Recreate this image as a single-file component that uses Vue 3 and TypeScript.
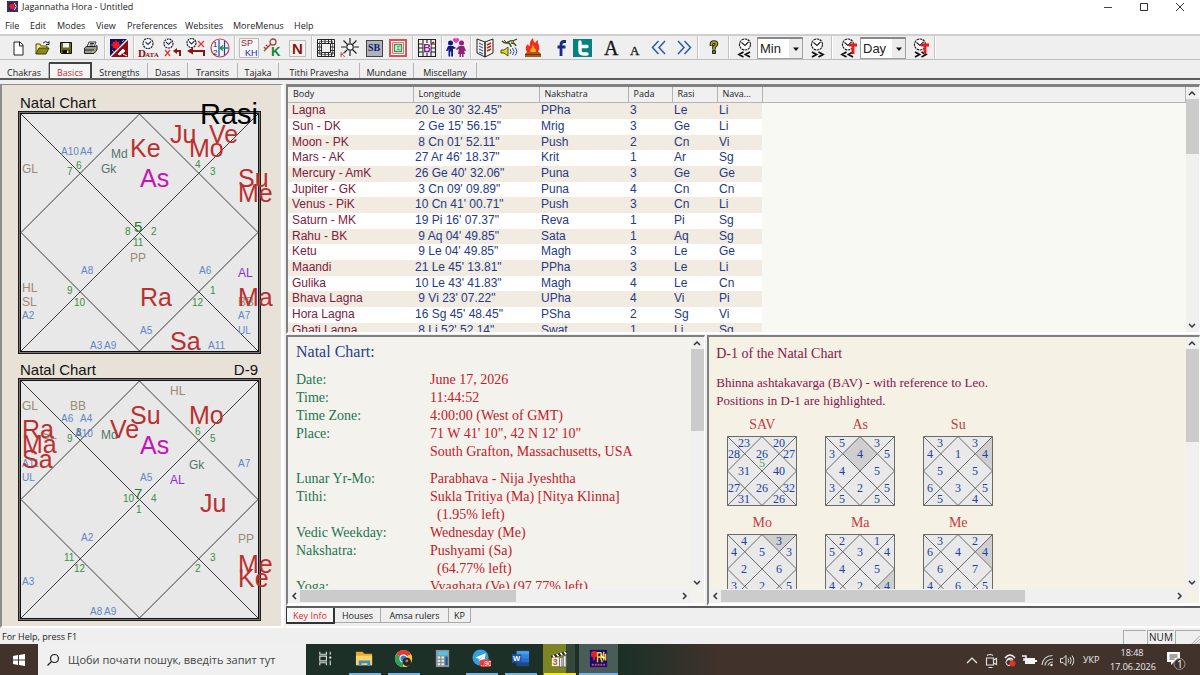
<script setup lang="ts">
import { ref } from 'vue'

type Mark = [text: string, x: number, y: number, kind: string]
interface Kundali { id: string; name: string; division: string; marks: Mark[] }
interface Tool { kind: string; name?: string; art?: string; options?: string[] }
interface Mini { name: string; values: string[]; highlight?: string; ref?: string }

const menus = ['File', 'Edit', 'Modes', 'View', 'Preferences', 'Websites', 'MoreMenus', 'Help']
const tabs = ['Chakras', 'Basics', 'Strengths', 'Dasas', 'Transits', 'Tajaka', 'Tithi Pravesha', 'Mundane', 'Miscellany']
const infoTabs = ['Key Info', 'Houses', 'Amsa rulers', 'KP']
const activeTab = ref('Basics')
const activeInfo = ref('Key Info')
const search = ref('')

const charts: Kundali[] = [
  {
    id: 'rasi', name: 'Natal Chart', division: '',
    marks: [
      ['A10', 59, 70, 'arudha'], ['A4', 78, 70, 'arudha'], ['Md', 109, 73, 'upa'], ['Gk', 99, 88, 'upa'],
      ['GL', 20, 88, 'lagna'], ['6', 74, 84, 'sign'], ['7', 65, 90, 'sign'], ['4', 193, 83, 'sign'],
      ['3', 208, 90, 'sign'], ['8', 123, 150, 'sign'], ['5', 132, 147, 'first'], ['2', 149, 150, 'sign'],
      ['11', 131, 161, 'sign'], ['PP', 128, 177, 'lagna'], ['A8', 79, 189, 'arudha'], ['A6', 197, 189, 'arudha'],
      ['AL', 236, 192, 'al'], ['HL', 20, 207, 'lagna'], ['SL', 20, 221, 'lagna'], ['9', 65, 209, 'sign'],
      ['10', 72, 221, 'sign'], ['12', 190, 221, 'sign'], ['1', 208, 209, 'sign'], ['BB', 236, 221, 'lagna'],
      ['A2', 20, 234, 'arudha'], ['A7', 236, 234, 'arudha'], ['A5', 138, 249, 'arudha'], ['UL', 236, 249, 'arudha'],
      ['A3', 88, 264, 'arudha'], ['A9', 102, 264, 'arudha'], ['A11', 206, 264, 'arudha'],
      ['Ke', 128, 72, 'graha'], ['Ju', 168, 58, 'graha'], ['Ve', 207, 58, 'graha'], ['Mo', 187, 72, 'graha'],
      ['As', 138, 102, 'asc'], ['Su', 236, 102, 'graha'], ['Me', 236, 117, 'graha'], ['Ra', 138, 221, 'graha'],
      ['Ma', 236, 221, 'graha'], ['Sa', 168, 265, 'graha'], ['Rasi', 198, 39, 'caption'],
    ],
  },
  {
    id: 'd9', name: 'Natal Chart', division: 'D-9',
    marks: [
      ['GL', 20, 58, 'lagna'], ['BB', 68, 58, 'lagna'], ['HL', 168, 43, 'lagna'], ['A6', 59, 70, 'arudha'],
      ['A4', 78, 70, 'arudha'], ['SL', 40, 87, 'lagna'], ['A11', 20, 115, 'arudha'], ['8', 74, 84, 'upanum'],
      ['A10', 73, 85, 'arudha'], ['9', 65, 90, 'sign'], ['Md', 99, 87, 'upa'], ['6', 193, 83, 'sign'],
      ['5', 208, 90, 'sign'], ['Gk', 187, 117, 'upa'], ['A7', 236, 115, 'arudha'], ['UL', 20, 129, 'arudha'],
      ['A5', 138, 129, 'arudha'], ['AL', 168, 132, 'al'], ['7', 132, 147, 'first'], ['10', 121, 150, 'sign'],
      ['4', 149, 150, 'sign'], ['1', 134, 161, 'sign'], ['PP', 236, 191, 'lagna'], ['A2', 79, 189, 'arudha'],
      ['11', 62, 209, 'sign'], ['12', 72, 220, 'sign'], ['3', 208, 209, 'sign'], ['2', 193, 220, 'sign'],
      ['A3', 20, 233, 'arudha'], ['A8', 88, 263, 'arudha'], ['A9', 102, 263, 'arudha'],
      ['Su', 128, 72, 'graha'], ['Ve', 108, 86, 'graha'], ['Mo', 187, 72, 'graha'], ['Ra', 20, 86, 'graha'],
      ['Ma', 20, 101, 'graha'], ['Sa', 20, 116, 'graha'], ['As', 138, 102, 'asc'], ['Ju', 198, 160, 'graha'],
      ['Me', 236, 221, 'graha'], ['Ke', 236, 235, 'graha'],
    ],
  },
]

const columns = ['Body', 'Longitude', 'Nakshatra', 'Pada', 'Rasi', 'Nava...']
const bodies: string[][] = [
  ['Lagna', '20 Le 30\' 32.45"', 'PPha', '3', 'Le', 'Li'],
  ['Sun - DK', ' 2 Ge 15\' 56.15"', 'Mrig', '3', 'Ge', 'Li'],
  ['Moon - PK', ' 8 Cn 01\' 52.11"', 'Push', '2', 'Cn', 'Vi'],
  ['Mars - AK', '27 Ar 46\' 18.37"', 'Krit', '1', 'Ar', 'Sg'],
  ['Mercury - AmK', '26 Ge 40\' 32.06"', 'Puna', '3', 'Ge', 'Ge'],
  ['Jupiter - GK', ' 3 Cn 09\' 09.89"', 'Puna', '4', 'Cn', 'Cn'],
  ['Venus - PiK', '10 Cn 41\' 00.71"', 'Push', '3', 'Cn', 'Li'],
  ['Saturn - MK', '19 Pi 16\' 07.37"', 'Reva', '1', 'Pi', 'Sg'],
  ['Rahu - BK', ' 9 Aq 04\' 49.85"', 'Sata', '1', 'Aq', 'Sg'],
  ['Ketu', ' 9 Le 04\' 49.85"', 'Magh', '3', 'Le', 'Ge'],
  ['Maandi', '21 Le 45\' 13.81"', 'PPha', '3', 'Le', 'Li'],
  ['Gulika', '10 Le 43\' 41.83"', 'Magh', '4', 'Le', 'Cn'],
  ['Bhava Lagna', ' 9 Vi 23\' 07.22"', 'UPha', '4', 'Vi', 'Pi'],
  ['Hora Lagna', '16 Sg 45\' 48.45"', 'PSha', '2', 'Sg', 'Vi'],
  ['Ghati Lagna', ' 8 Li 52\' 52.14"', 'Swat', '1', 'Li', 'Sg'],
]

const facts: { label: string; lines: string[]; gap?: boolean }[] = [
  { label: 'Date:', lines: ['June 17, 2026'] },
  { label: 'Time:', lines: ['11:44:52'] },
  { label: 'Time Zone:', lines: ['4:00:00 (West of GMT)'] },
  { label: 'Place:', lines: ['71 W 41\' 10", 42 N 12\' 10"', 'South Grafton, Massachusetts, USA'] },
  { label: 'Lunar Yr-Mo:', lines: ['Parabhava - Nija Jyeshtha'], gap: true },
  { label: 'Tithi:', lines: ['Sukla Tritiya (Ma) [Nitya Klinna]', '  (1.95% left)'] },
  { label: 'Vedic Weekday:', lines: ['Wednesday (Me)'] },
  { label: 'Nakshatra:', lines: ['Pushyami (Sa)', '  (64.77% left)'] },
  { label: 'Yoga:', lines: ['Vyaghata (Ve) (97.77% left)'] },
]

// House cells in drawing order: top pair, upper row, middle pair, lower row, bottom pair
const houseSpots: [number, number][] = [
  [17, 11], [52, 11], [7, 22], [35, 22], [62, 22], [17, 39], [52, 39],
  [7, 56], [35, 56], [62, 56], [17, 67], [52, 67],
]
const minis: Mini[] = [
  { name: 'SAV', values: ['23', '20', '28', '26', '27', '31', '40', '27', '26', '32', '31', '26'], ref: '5' },
  { name: 'As', values: ['5', '3', '3', '4', '5', '4', '5', '3', '2', '5', '5', '5'], highlight: '35,0 52.5,17.5 35,35 17.5,17.5' },
  { name: 'Su', values: ['3', '3', '4', '1', '4', '5', '5', '6', '3', '5', '5', '4'], highlight: '70,0 70,35 52.5,17.5' },
  { name: 'Mo', values: ['4', '3', '4', '5', '3', '2', '6', '3', '2', '5', '4', '4'], highlight: '35,0 70,0 52.5,17.5' },
  { name: 'Ma', values: ['2', '1', '5', '3', '4', '4', '5', '4', '2', '4', '3', '2'], highlight: '70,35 70,70 52.5,52.5' },
  { name: 'Me', values: ['3', '2', '6', '4', '4', '6', '7', '4', '6', '5', '4', '3'], highlight: '70,0 70,35 52.5,17.5' },
]

const clock = (cx: number, cy: number, r: number, c = '#222') =>
  `<circle cx="${cx}" cy="${cy}" r="${r}" fill="#fff" stroke="${c}" stroke-width="1.2" stroke-dasharray="2 .7"/><path d="M${cx - 2.5} ${cy - 1.5}L${cx} ${cy + 1}L${cx + 3} ${cy - 2}" fill="none" stroke="#1a2f90" stroke-width="1.1"/>`
const sans = 'font-family="Liberation Sans, Arial, sans-serif"'
const serif = 'font-family="Liberation Serif, serif"'
const chevrons = (left: boolean) =>
  left
    ? '<path d="M8.500 14l-4.500 2.500l4.500 2.500M15 14l-4.500 2.500l4.500 2.500" fill="none" stroke="#111" stroke-width="1.800"/>'
    : '<path d="M5 14l4.500 2.500L5 19M11.500 14l4.500 2.500l-4.500 2.500" fill="none" stroke="#111" stroke-width="1.800"/>'
const stepClock = (left: boolean, t: boolean) =>
  `<circle cx="10" cy="6.500" r="5.500" fill="#fff" stroke="#222" stroke-width="1.200" stroke-dasharray="2.500 .6"/><path d="M6.500 4.500l3.500 3l3.500-3.500" fill="none" stroke="#222" stroke-width="1.200"/>${chevrons(left)}` +
  (t ? '<path d="M11 7h8M15 7v9" stroke="#f01818" stroke-width="2.800" fill="none"/>' : '')

const tools: Tool[] = [
  { kind: 'btn', name: 'New', art: '<path d="M6 4h6l3 3v10H6z" fill="#fff" stroke="#222"/><path d="M11.500 4v4H15" fill="none" stroke="#222"/>' },
  { kind: 'btn', name: 'Open', art: '<path d="M4 16V6h4l1 2h6v2" fill="#f2ea70" stroke="#4a4a10"/><path d="M4 16l3-6h10l-3 6z" fill="#8a8a14" stroke="#3a3a08"/><path d="M11 5q3-3 5 0l1-1.500v3h-3" fill="none" stroke="#222"/>' },
  { kind: 'btn', name: 'Save', art: '<path d="M4.500 4.500h11v11h-10l-1-1z" fill="#6b6b10" stroke="#111"/><path d="M7 5h6v4.500H7z" fill="#f0f0f0"/><path d="M6.500 12h7v3.500h-7z" fill="#111"/><path d="M11 12.500h1.500v2.500H11z" fill="#eee"/>' },
  { kind: 'btn', name: 'Print', art: '<path d="M7 9l2-5h7l-2 5" fill="#fff" stroke="#333"/><path d="M4.500 10l2-1.500h9l1.500-1v4.500l-3 3.500H4.500z" fill="#999" stroke="#222"/><path d="M5 12h9M6 15.500h7M10 5.500h4M9.500 7h4" stroke="#222"/><path d="M12 13.500h2" stroke="#d8c820"/>' },
  { kind: 'sep' },
  { kind: 'btn', name: 'Chakra picture', art: '<path d="M1 1h18v18H1z" fill="#10105c"/><path d="M1 19L19 1v18z" fill="#8c0c18"/><path d="M1 19L19 1" stroke="#fff" stroke-width="1.200"/><circle cx="7" cy="7" r="3.600" fill="#f01820"/><path d="M7 2v10M2 7h10M3.500 3.500l7 7M10.500 3.500l-7 7" stroke="#f01820"/><path d="M9 16l5-5l2 2l-5 4zM14 16l4 2" fill="#fff" stroke="#fff"/><path d="M3 12l2 2M13 4l2-2" stroke="#9ac"/>' },
  { kind: 'sep' },
  { kind: 'btn', name: 'Data', art: clock(10, 5.5, 5) + `<text x="0" y="19" ${serif} font-size="11" font-weight="bold" fill="#8a1414">D</text><text x="7" y="19" ${serif} font-size="7" font-weight="bold" fill="#8a1414">ATA</text>` },
  { kind: 'btn', name: 'Reset time', art: clock(6.5, 5.5, 4.5) + '<path d="M3 12l5 6M8 12l-5 6" stroke="#e83030" stroke-width="1.200"/><path d="M18 18v-5h-5" fill="none" stroke="#8a1414" stroke-width="2"/><path d="M15 10l-4 3l4 3z" fill="#8a1414"/>' },
  { kind: 'btn', name: 'Undo time', art: clock(5.5, 5, 4.5) + '<path d="M12 3l6 6M18 3l-6 6" stroke="#e83030" stroke-width="1.200"/><path d="M18 18v-5H6" fill="none" stroke="#8a1414" stroke-width="2"/><path d="M7 9.500l-6 3.500l6 3.500z" fill="#8a1414"/>' },
  { kind: 'btn', name: 'Adjust time', art: `<circle cx="10" cy="10" r="9" fill="#f4f4ff" stroke="#b84050" stroke-width="1.200"/><text x="3" y="9" ${sans} font-size="8" fill="#222">1</text><text x="3" y="17" ${sans} font-size="8" fill="#222">2</text><path d="M9 2v16M14.500 3v14" stroke="#2438b8" stroke-width="1.200"/><path d="M18 10h-7M13 7.500L10 10l3 2.500" fill="none" stroke="#1c9038" stroke-width="1.300"/>` },
  { kind: 'sep' },
  { kind: 'btn', name: 'SP KH', art: `<path d="M.5 .5h19v19H.5z" fill="#f6f6f6" stroke="#bbb"/><text x="2" y="8" ${sans} font-size="9" fill="#9c2030">SP</text><text x="6" y="18" ${sans} font-size="9" fill="#2428a0">KH</text>` },
  { kind: 'btn', name: 'K key', art: `<circle cx="10" cy="4" r="3" fill="none" stroke="#a04040" stroke-width="1.300"/><path d="M8 6l-7 7M3 11l-2-2M5 9l-2-2" stroke="#a04040" stroke-width="1.300"/><text x="8" y="18" ${sans} font-size="13" font-weight="bold" fill="#188038">K</text>` },
  { kind: 'btn', name: 'N', art: `<path d="M2.500 2.500h16v16h-16z" fill="#f6f4ec" stroke="#bbb"/><text x="5" y="16" ${sans} font-size="15" font-weight="bold" fill="#8a1414">N</text>` },
  { kind: 'sep' },
  { kind: 'btn', name: 'Square chart', art: '<path d="M1.500 1.500h17v17h-17zM5.500 5.500h9v9h-9zM5.500 1v4M9 1v4M12.500 1v4M5.500 15v4M9 15v4M12.500 15v4M1 5.500h4M1 9h4M1 12.500h4M15 5.500h4M15 9h4M15 12.500h4M15.500 1v4M15.500 15v4M1 15h4M15 15h4" fill="none" stroke="#222"/><path d="M3.500 3.500h13v13h-13z" fill="none" stroke="#444" stroke-width=".7"/>' },
  { kind: 'btn', name: 'Sun rays', art: `<circle cx="10" cy="9" r="3.200" fill="#fff" stroke="#222" stroke-width="1.200"/><path d="M10 0v5M10 13v5M1 9h5M14 9h5M3.500 2.500l4 4M12.500 11.500l4 4M16.500 2.500l-4 4M7 12l-3 3" stroke="#222" stroke-width="1.200"/><text x="0" y="19" ${sans} font-size="8" fill="#a02020">K</text>` },
  { kind: 'btn', name: 'SB', art: `<path d="M2 2h17v17H2z" fill="#444"/><path d="M3 3h15v15H3z" fill="#aeb2ba"/><text x="4" y="13" ${serif} font-size="10" font-weight="bold" fill="#10206c">SB</text>` },
  { kind: 'btn', name: 'Yantra', art: `<path d="M2 2h16v16H2z" fill="#fff" stroke="#e05050" stroke-width="2"/><path d="M4.500 4.500h11v11h-11z" fill="none" stroke="#e87070"/><path d="M6.500 6.500h7v7h-7z" fill="#e4f8e8" stroke="#309858" stroke-width="1.500"/><path d="M9 8.500h3M9 10h2.500M9 11.500h3" stroke="#309858" stroke-width=".8"/>` },
  { kind: 'sep' },
  { kind: 'btn', name: 'Bhava chart', art: `<path d="M1.500 1.500h17v17h-17zM6 1v18M10 1v18M14 1v18M1 6h18M1 10h18M1 14h18" fill="none" stroke="#222" stroke-width="1.100"/><path d="M6.500 5h7v9.500h-7z" fill="#fff"/><text x="6" y="14" ${sans} font-size="11" font-weight="bold" fill="#8c1890">B</text><path d="M14 6l3-2" stroke="#a01818" stroke-width="1.500"/>` },
  { kind: 'sep' },
  { kind: 'btn', name: 'Compatibility', art: '<path d="M10 5.500l-3-3a1.500 1.500 0 0 1 3-1.500a1.500 1.500 0 0 1 3 1.500z" fill="#e838c8"/><circle cx="4.500" cy="5" r="2.500" fill="#101888"/><path d="M2 8h5l3 2l-2 1l-1-.5v8H5.200v-5h-1v5H2.500V11l-1 2H0z" fill="#101888"/><circle cx="15.500" cy="5" r="2.500" fill="#90207c"/><path d="M13 8h5l2 5h-1.500l-.5-1l1 4h-1.500v3H16v-3h-1v3h-1.500v-3H12l1-5l-2 1l-1-1z" fill="#90207c"/>' },
  { kind: 'sep' },
  { kind: 'btn', name: 'Book', art: '<path d="M2 3V1l8 3l8-3v14l-8 4l-8-4z" fill="#f4f4e8" stroke="#222"/><path d="M10 4v15" stroke="#222" stroke-width="1.500"/><path d="M4 5l4 2M4 8l4 2M4 11l4 2M4 14l4 2" stroke="#2438a8"/><path d="M12 7l4-2M12 10l4-2M12 13l4-2" stroke="#b82828" stroke-width="1.500"/>' },
  { kind: 'btn', name: 'Chant', art: '<path d="M3 3q4 4 8 0q4 0 7-2M8 4q4 2 4 5M12 5q4 0 5 3" fill="none" stroke="#2c5a18" stroke-width="1.500"/><path d="M5 2l3 3M14 2l1 4" stroke="#a02020"/><path d="M2 12h3l4-3v9l-4-3H2z" fill="#e0d820" stroke="#54500c"/><path d="M11 11q2 2.500 0 5M13.500 10q3 3.500 0 7M16 9.500q3.500 4 0 8" fill="none" stroke="#3848b0"/>' },
  { kind: 'btn', name: 'Homa', art: '<path d="M4 14q-3-5 1-8q0 2 2 2q-1-5 3-8q0 3 2 5q1-2 3-3q-1 3 1 5q1 4-1 7z" fill="#f03018"/><path d="M7.500 14q-1-3 1.500-4q0-2 1-3q1 3 2.500 4q1 2 0 3z" fill="#fcb028"/><path d="M4 14h12l2 2v3H2v-3z" fill="#a85a18"/><path d="M2 16.500h16" stroke="#6c3408"/>' },
  { kind: 'gap' },
  { kind: 'btn', name: 'Facebook', art: '<path d="M16 3.500h-2q-3 0-3 3.200V18M7.500 9h8" fill="none" stroke="#142c84" stroke-width="2.800"/>' },
  { kind: 'btn', name: 'Twitter', art: '<path d="M-1 1h19v18H-1z" fill="#088080"/><path d="M6 4v8.500q0 3.500 3.500 3.500H13M6 8.500h7" fill="none" stroke="#fff" stroke-width="3.400" stroke-linecap="round"/>' },
  { kind: 'gap' },
  { kind: 'btn', name: 'Larger text', art: `<text x="3" y="17" ${serif} font-size="20" fill="#111" stroke="#111" stroke-width=".3">A</text>` },
  { kind: 'btn', name: 'Smaller text', art: `<text x="5" y="17" ${serif} font-size="13" fill="#111" stroke="#111" stroke-width=".3">A</text>` },
  { kind: 'btn', name: 'Previous', art: '<path d="M9.500 3L3.500 9.500L9.500 16M16 3L10 9.500L16 16" fill="none" stroke="#2c5aa0" stroke-width="1.500"/>' },
  { kind: 'btn', name: 'Next', art: '<path d="M5 3l6 6.500L5 16M11.500 3l6 6.500L11.500 16" fill="none" stroke="#2c5aa0" stroke-width="1.500"/>' },
  { kind: 'sep wide' },
  { kind: 'btn', name: 'Help', art: '<path d="M7.500 8V6q0-2 2.500-2t2.500 2q0 1.500-2.500 3v2.500" fill="none" stroke="#222" stroke-width="3.600"/><path d="M7.500 7.500V6q0-2 2.500-2t2.500 2q0 1.500-2.500 3v2" fill="none" stroke="#b8b018" stroke-width="1.500"/><path d="M8.500 12.500h3v3h-3z" fill="#8c8810" stroke="#222"/>' },
  { kind: 'sep wide' },
  { kind: 'btn', name: 'Minute back', art: stepClock(true, false) },
  { kind: 'combo', name: 'Time step', options: ['Min', 'Hour', 'Sec'] },
  { kind: 'btn', name: 'Minute forward', art: stepClock(false, false) },
  { kind: 'sep wide' },
  { kind: 'btn', name: 'Transit back', art: stepClock(true, true) },
  { kind: 'combo', name: 'Transit step', options: ['Day', 'Month', 'Year'] },
  { kind: 'btn', name: 'Transit forward', art: stepClock(false, true) },
  { kind: 'sep' },
]

const taskApps = [
  { name: 'Task view', cls: '', art: '<path d="M4 3v2.500h7V3M4 17v-2.500h7V17M4 7.500h7v5H4zM15 3v3M15 12v5" fill="none" stroke="#d8dcd8" stroke-width="1.200"/><path d="M14 8h2v2h-2z" fill="#fff"/>' },
  { name: 'File Explorer', cls: 'open', art: '<path d="M1 3h7l2 2h8v12H1z" fill="#e8a82c"/><path d="M1 7h17v10H1z" fill="#fcd464"/><path d="M4 18v-6h12v6h-3v-3H7v3z" fill="#3c8cd0"/>' },
  { name: 'Chrome', cls: 'open', art: '<circle cx="10" cy="10" r="9" fill="#fff"/><path d="M10 10L2.200 5.500A9 9 0 0 1 17.800 5.500z" fill="#e03c30"/><path d="M10 10L2.200 5.500A9 9 0 0 0 10 19z" fill="#30a050"/><path d="M10 10l7.800-4.500A9 9 0 0 1 10 19z" fill="#f8c828"/><circle cx="10" cy="10" r="4.200" fill="#fff"/><circle cx="10" cy="10" r="3.200" fill="#3c78e0"/><circle cx="13.500" cy="13.500" r="4.500" fill="#2c2424"/><circle cx="13.500" cy="12.500" r="1.500" fill="#a08878"/>' },
  { name: 'Calculator', cls: '', art: '<path d="M3 1h14v18H3z" fill="#8c9498"/><path d="M4.500 2.500h11v4h-11z" fill="#4cc4ec"/><path d="M5 8h2.500v2H5zM9 8h2.500v2H9zM5 11.500h2.500v2H5zM9 11.500h2.500v2H9zM5 15h2.500v2H5zM9 15h2.500v2H9z" fill="#eef2f4"/><path d="M13 8h2.500v9H13z" fill="#1c5c9c"/>' },
  { name: 'Telegram', cls: 'open', art: `<circle cx="9" cy="9" r="8.500" fill="#34a0dc"/><path d="M3.500 9l11-4.500L12.500 14l-3-2.200L8 13.500l-.3-3z" fill="#fff"/><path d="M7.700 10.500l5-4.500l-4 5z" fill="#9cc8e4"/><rect x="8" y="11" width="13" height="8" rx="3.500" fill="#e83c34"/><text x="9" y="18" ${sans} font-size="7" fill="#fff">..90</text>` },
  { name: 'Word', cls: 'open', art: `<path d="M6 2h13v16H6z" fill="#2c6cc8"/><path d="M6 2h13v4H6z" fill="#44a0ec"/><path d="M6 6h13v4H6z" fill="#3084dc"/><path d="M6 14h13v4H6z" fill="#1c488c"/><path d="M1 5.500h10v9H1z" fill="#1c54b0"/><text x="2" y="13" ${sans} font-size="8" font-weight="bold" fill="#fff">W</text>` },
  { name: 'Video editor', cls: 'flash', art: `<path d="M1 7l16-5l1 3L2 10z" fill="#222"/><path d="M3 6.500l2 2.500M7 5.200l2 2.500M11 4l2 2.500M15 3l2 2.500" stroke="#fff" stroke-width="1.700"/><path d="M2 9h14v9H2z" fill="#f0ece0"/><text x="3" y="17" ${sans} font-size="9" font-weight="bold" fill="#c85018">3</text><path d="M10 9h2.500v10H10zM14 7h3v12h-3z" fill="#e8e8e8" stroke="#555" stroke-width=".8"/>` },
  { name: 'Jagannatha Hora', cls: 'current', art: '<path d="M1 1h18v18H1z" fill="#100c78"/><circle cx="5.500" cy="5.500" r="3.500" fill="#f01c20"/><path d="M5.500 8v4" stroke="#f01c20" stroke-width="2"/><path d="M9 14V4h3.500q2 2 0 4.500H9M12 9l2 5M15.500 3v9M13 9h4.500M17.500 5v7" fill="none" stroke="#fcd020" stroke-width="1.500"/><path d="M12 6l4 4" stroke="#fff" stroke-width="1.200"/><path d="M3 16.500h14" stroke="#e04858" stroke-width="2" stroke-dasharray="2 1"/>' },
]

const tray = [
  { name: 'Show hidden icons', art: '<path d="M4 12l5-5l5 5" fill="none" stroke="#eee" stroke-width="1.200"/>' },
  { name: 'Meet now', art: '<path d="M4.500 7h7v7h-7zM11.500 9l3-1.500v6l-3-1.500M5 4.500q3-2 6 0M6.500 16.500h4" fill="none" stroke="#ddd" stroke-width="1.200"/>' },
  { name: 'Recorder', art: '<path d="M4 7q5-6 10 0M6 9q3-3.500 6 0" fill="none" stroke="#eee" stroke-width="1.500"/><circle cx="8" cy="11.500" r="3" fill="none" stroke="#eee"/><circle cx="11.500" cy="12.500" r="3" fill="#e83028"/>' },
  { name: 'Battery', art: '<path d="M5 7h10v6H5zM15 9h2v2h-2z" fill="#f4f4f4"/><path d="M2 5h4v3H4v2" fill="none" stroke="#f4f4f4" stroke-width="1.500"/>' },
  { name: 'Wi-Fi', art: '<path d="M3 14Q4 5 13.500 4.500M6 14.500q.5-6 8-6.500M9 14.500q.5-3 5-3.500" fill="none" stroke="#ccc" stroke-width="1.200"/><circle cx="12.500" cy="14" r="1.200" fill="#eee"/>' },
  { name: 'Volume', art: '<path d="M2.500 7.500h2.500l3-3v10l-3-3H2.500z" fill="none" stroke="#ddd"/><path d="M10 7.500q1.500 2 0 4M12 6q2.500 3.500 0 7M14 4.500q3.500 5 0 10" fill="none" stroke="#ddd"/>' },
]
</script>

<template>
  <div class="desktop">
    <header class="titlebar">
      <svg class="app-icon" viewBox="0 0 12 12" aria-hidden="true">
        <path d="M0 0h12v12H0z" fill="#1c2468" /><path d="M1 1h10v10H1z" fill="none" stroke="#c04058" stroke-dasharray="1 1" />
        <circle cx="5.500" cy="6" r="3" fill="#f01c20" /><path d="M8 2l2 4l-2 4" stroke="#fff" fill="none" />
      </svg>
      <h1>Jagannatha Hora - Untitled</h1>
      <div class="window-buttons">
        <button type="button" aria-label="Minimize"><svg viewBox="0 0 12 12"><path d="M2 6.500h8" stroke="#444" /></svg></button>
        <button type="button" aria-label="Maximize"><svg viewBox="0 0 12 12"><path d="M2.500 2.500h7v7h-7z" fill="none" stroke="#333" /></svg></button>
        <button type="button" aria-label="Close"><svg viewBox="0 0 12 12"><path d="M2 2l8 8M10 2l-8 8" stroke="#333" /></svg></button>
      </div>
    </header>

    <nav class="menubar" aria-label="Menu">
      <button v-for="m in menus" :key="m" type="button">{{ m }}</button>
    </nav>

    <div class="toolbar" role="toolbar" aria-label="Tools">
      <template v-for="(t, i) in tools" :key="i">
        <button v-if="t.kind === 'btn'" type="button" class="tool" :aria-label="t.name">
          <svg viewBox="0 0 20 20" v-html="t.art"></svg>
        </button>
        <span v-else-if="t.kind === 'combo'" class="combo">
          <select :aria-label="t.name">
            <option v-for="o in t.options" :key="o">{{ o }}</option>
          </select>
          <svg class="caret" viewBox="0 0 12 20" aria-hidden="true"><path d="M3 8.500h6L6 12z" fill="#111" /></svg>
        </span>
        <span v-else :class="t.kind"></span>
      </template>
    </div>

    <div class="tabs" role="tablist">
      <button
        v-for="t in tabs" :key="t" type="button" role="tab"
        :aria-selected="activeTab === t" :class="{ active: activeTab === t }" @click="activeTab = t"
      >{{ t }}</button>
    </div>

    <main class="workspace">
      <section class="charts">
        <svg v-for="c in charts" :key="c.id" class="kundali" viewBox="0 0 279 267" role="img" :aria-label="c.name">
          <text x="18" y="23" class="title">{{ c.name }}</text>
          <text x="256" y="23" class="title" text-anchor="end">{{ c.division }}</text>
          <rect x="16" y="26" width="243" height="243" fill="#000" />
          <rect x="17.500" y="27.500" width="240" height="240" fill="#e8e8e8" stroke="#77736d" stroke-width="1.500" />
          <rect x="18.500" y="28.500" width="238" height="238" fill="#e8e8e8" stroke="#111" />
          <path d="M19 29L256 266M256 29L19 266M137.500 29L256 147.500L137.500 266L19 147.500z" fill="none" stroke="#3c3c3c" />
          <text v-for="(m, i) in c.marks" :key="i" :x="m[1]" :y="m[2]" :class="m[3]">{{ m[0] }}</text>
        </svg>
      </section>

      <div class="right">
        <section class="pane bodies">
          <div class="view">
            <table>
              <colgroup>
                <col class="c-body"><col class="c-long"><col class="c-nak"><col class="c-pada"><col class="c-rasi"><col class="c-nava"><col>
              </colgroup>
              <thead>
                <tr><th v-for="c in columns" :key="c" scope="col">{{ c }}</th><td class="rest"></td></tr>
              </thead>
              <tbody>
                <tr v-for="b in bodies" :key="b[0]">
                  <td v-for="(v, i) in b" :key="i">{{ v }}</td>
                </tr>
              </tbody>
            </table>
          </div>
          <div class="scroll v" aria-hidden="true">
            <svg viewBox="0 0 12 12"><path d="M3 8l3-3l3 3" /></svg>
            <div class="track"><i class="thumb t25"></i></div>
            <svg viewBox="0 0 12 12"><path d="M3 4l3 3l3-3" /></svg>
          </div>
        </section>

        <div class="lower">
          <section class="pane info">
            <div class="stack">
              <div class="view">
                <h2>Natal Chart:</h2>
                <dl>
                  <template v-for="f in facts" :key="f.label">
                    <dt :class="{ spaced: f.gap }">{{ f.label }}</dt>
                    <dd :class="{ spaced: f.gap }"><div v-for="l in f.lines" :key="l">{{ l }}</div></dd>
                  </template>
                </dl>
              </div>
              <div class="scroll h" aria-hidden="true">
                <svg viewBox="0 0 12 12"><path d="M8 3L5 6l3 3" /></svg>
                <div class="track"><i class="thumb t57"></i></div>
                <svg viewBox="0 0 12 12"><path d="M4 3l3 3l-3 3" /></svg>
              </div>
            </div>
            <div class="scroll v short" aria-hidden="true">
              <svg viewBox="0 0 12 12"><path d="M3 8l3-3l3 3" /></svg>
              <div class="track"><i class="thumb t36"></i></div>
              <svg viewBox="0 0 12 12"><path d="M3 4l3 3l3-3" /></svg>
            </div>
          </section>

          <section class="pane bav">
            <div class="stack">
              <div class="view">
                <h2>D-1 of the Natal Chart</h2>
                <p>Bhinna ashtakavarga (BAV) - with reference to Leo.<br>Positions in D-1 are highlighted.</p>
                <div class="minis">
                  <figure v-for="m in minis" :key="m.name">
                    <figcaption>{{ m.name }}</figcaption>
                    <svg viewBox="0 0 70 70" role="img" :aria-label="m.name">
                      <rect x=".5" y=".5" width="69" height="69" fill="#e9e9e9" />
                      <polygon v-if="m.highlight" :points="m.highlight" fill="#cfcfcf" />
                      <path d="M.5 .5h69v69H.5zM.5 .5l69 69M69.500 .5l-69 69M35 .5L69.500 35L35 69.500L.5 35z" fill="none" stroke="#6a6a6a" />
                      <text v-if="m.ref" x="35" y="31" class="ref">{{ m.ref }}</text>
                      <text v-for="(v, i) in m.values" :key="i" :x="houseSpots[i][0]" :y="houseSpots[i][1]">{{ v }}</text>
                    </svg>
                  </figure>
                </div>
              </div>
              <div class="scroll h" aria-hidden="true">
                <svg viewBox="0 0 12 12"><path d="M8 3L5 6l3 3" /></svg>
                <div class="track"><i class="thumb t67"></i></div>
                <svg viewBox="0 0 12 12"><path d="M4 3l3 3l-3 3" /></svg>
              </div>
            </div>
            <div class="scroll v short" aria-hidden="true">
              <svg viewBox="0 0 12 12"><path d="M3 8l3-3l3 3" /></svg>
              <div class="track"><i class="thumb t41"></i></div>
              <svg viewBox="0 0 12 12"><path d="M3 4l3 3l3-3" /></svg>
            </div>
          </section>
        </div>

        <div class="info-tabs" role="tablist">
          <button
            v-for="t in infoTabs" :key="t" type="button" role="tab"
            :aria-selected="activeInfo === t" :class="{ active: activeInfo === t }" @click="activeInfo = t"
          >{{ t }}</button>
        </div>
      </div>
    </main>

    <footer class="status">
      <span class="hint">For Help, press F1</span>
      <span class="cell"></span><span class="cell">NUM</span>
      <span class="cell grip"><svg viewBox="0 0 12 12" aria-hidden="true"><path d="M1 12L12 1M5 12l7-7M9 12l3-3" stroke="#999" /></svg></span>
    </footer>

    <div class="taskbar">
      <button type="button" class="start" aria-label="Start">
        <svg viewBox="0 0 14 14"><path d="M1 3l5-1v4.500H1zM7 2l6-1v5.500H7zM1 7.500h5V12l-5-1zM7 7.500h6V13l-6-1z" fill="#fff" /></svg>
      </button>
      <label class="search">
        <svg viewBox="0 0 14 14" aria-hidden="true"><circle cx="8.500" cy="5.500" r="4" fill="none" stroke="#222" stroke-width="1.200" /><path d="M5.500 8.500L1.500 12.500" stroke="#222" stroke-width="1.200" /></svg>
        <input v-model="search" type="text" aria-label="Пошук" placeholder="Щоби почати пошук, введіть запит тут">
      </label>
      <button v-for="a in taskApps" :key="a.name" type="button" class="app" :class="a.cls" :aria-label="a.name">
        <svg viewBox="0 0 20 20" v-html="a.art"></svg>
      </button>
      <div class="tray">
        <button v-for="t in tray" :key="t.name" type="button" :aria-label="t.name"><svg viewBox="0 0 18 18" v-html="t.art"></svg></button>
        <span class="lang">УКР</span>
        <time datetime="2026-06-17T18:48">18:48<br>17.06.2026</time>
        <button type="button" class="notice" aria-label="Notifications">
          <svg viewBox="0 0 20 20">
            <path d="M1 2h13v10H8l-3 3v-3H1z" fill="#fff" /><path d="M3.500 5h8M3.500 7h8M3.500 9h5" stroke="#41322b" stroke-width=".9" />
            <circle cx="13.500" cy="14" r="5.500" fill="#41322b" stroke="#999" /><text x="11" y="18" font-size="10" fill="#fff">1</text>
          </svg>
        </button>
      </div>
    </div>
  </div>
</template>

<style>
body { margin: 0; background: #f0f0f0; }
</style>

<style scoped>
.desktop {
  display: flex; flex-direction: column; height: 100vh; overflow: hidden; box-sizing: border-box;
  background: #efefef; color: #222; font: 9px/12px "Open Sans", "Noto Sans", sans-serif;
}
button { border: 0; padding: 0; margin: 0; background: none; color: inherit; font: inherit; cursor: default; white-space: nowrap; }
h1, h2, p, dl, dd, figure { margin: 0; font-weight: normal; font-size: inherit; }
svg { display: block; flex: none; }

.titlebar { display: flex; align-items: center; flex: none; height: 13px; padding: 0 2px 3px 7px; background: #fff; }
.titlebar h1 { margin-left: 4px; }
.app-icon { width: 11px; height: 11px; }
.window-buttons { display: flex; margin-left: auto; }
.window-buttons button { display: flex; justify-content: center; width: 36px; }
.window-buttons svg { width: 12px; height: 12px; }

.menubar { display: grid; grid-template-columns: 25px 27px 39px 31px 58px 48px 61px auto; justify-content: start; flex: none; height: 16px; padding: 2px 0 0 5px; background: #fff; }
.menubar button { text-align: left; }

.toolbar { display: flex; align-items: center; flex: none; height: 23px; padding-left: 6px; border-top: 2px solid #cfcfcf; border-bottom: 1px solid #bdbdbd; }
.tool { display: flex; align-items: center; justify-content: center; width: 24px; height: 22px; }
.tool svg { width: 20px; height: 20px; overflow: visible; }
.sep { width: 5px; height: 23px; flex: none; background: linear-gradient(90deg, transparent 2px, #c4c4c4 2px, #c4c4c4 3px, #fff 3px, #fff 4px, transparent 4px); }
.sep.wide { width: 7px; }
.gap { width: 3px; }
.combo { position: relative; display: flex; width: 46px; height: 22px; align-self: flex-end; margin-right: 2px; }
.combo select {
  appearance: none; width: 100%; height: 100%; box-sizing: border-box; margin: 0; padding: 0 0 0 2px; border: 1px solid #a0a0a0; border-top: 2px solid #888; border-radius: 0;
  background: linear-gradient(90deg, #fff 31px, #ececec 31px); color: #222; font: 13px/18px "Liberation Sans", Arial, sans-serif;
}
.caret { position: absolute; right: 1px; top: 2px; width: 12px; height: 20px; pointer-events: none; }

.tabs { display: grid; grid-template-columns: 49px 43px 56px 40px 50px 41px 81px 54px 63px; align-items: end; flex: none; height: 17px; border-bottom: 2px solid #5c5c5c; padding-top: 1px; }
.tabs button { height: 15px; border-right: 1px solid #b4b4b4; line-height: 19px; }
.tabs button.active { height: 16px; border: 2px solid #444; border-width: 2px 2px 0 1px; color: #d82830; background: #f6f6f6; line-height: 17px; }

.workspace { display: flex; flex: 1 1 0; min-height: 0; margin-top: 4px; }
.charts { box-sizing: border-box; flex: none; width: 284px; margin-right: 2px; border: solid #8c8c8c; border-width: 1px 0 0 2px; border-right: 3px solid #fff; border-bottom: 2px solid #fff; background: #e8e1d7; }
.kundali { width: 279px; height: 267px; overflow: visible; font-family: "Liberation Sans", Arial, sans-serif; }
.title { font-size: 15px; fill: #111; }
.arudha { font-size: 10px; fill: #5f86c6; }
.upa { font-size: 12px; fill: #54746a; }
.upanum { font-size: 10px; fill: #306a58; }
.lagna { font-size: 12px; fill: #9a8a72; }
.sign { font-size: 10px; fill: #3c8c44; }
.al { font-size: 12px; fill: #8430d4; }
.first { font-size: 15px; fill: #2c7838; }
.graha { font-size: 25px; fill: #b93030; }
.asc { font-size: 25px; fill: #c414b4; }
.caption { font-size: 29px; fill: #000; }

.right { display: flex; flex-direction: column; flex: 1 1 0; min-width: 0; }
.pane { display: flex; box-sizing: border-box; min-width: 0; min-height: 0; border: solid #808080; border-width: 2px 1px 3px 2px; border-right-color: #fff; border-bottom-color: #fff; overflow: hidden; background: #f0f0f0; }
.view { flex: 1 1 0; min-width: 0; min-height: 0; overflow: hidden; }
.stack { display: flex; flex-direction: column; flex: 1 1 0; min-width: 0; }
.bodies { flex: 246 1 0; border-top-width: 3px; border-bottom-width: 2px; }
.bodies .view { background: #f8f9f3; }
table { table-layout: fixed; width: 100%; border-collapse: collapse; }
.c-body { width: 125px; } .c-long { width: 126px; } .c-nak { width: 89px; } .c-pada { width: 44px; } .c-rasi { width: 45px; } .c-nava { width: 45px; }
th, .rest { box-sizing: border-box; height: 15px; padding: 0 0 0 5px; border-right: 1px solid #b4b4b4; border-bottom: 1px solid #b4b4b4; background: #f0f0f0; font-weight: normal; line-height: 14px; text-align: left; }
tbody td { height: 16px; padding: 0 0 0 2px; background: #fff; color: #243a86; font: 12px/15px "Liberation Sans", Arial, sans-serif; white-space: pre; }
tbody tr:nth-child(3n) td { height: 15px; }
tbody tr:nth-child(odd) td { background: #f2ebe1; }
tbody td:first-child { padding-left: 4px; color: #7c2040; }

.scroll { display: flex; flex: none; background: #f0f0f0; }
.scroll svg { width: 12px; height: 12px; }
.scroll path { fill: none; stroke: #333; stroke-width: 1.500; }
.scroll.v { flex-direction: column; width: 13px; }
.scroll.short { margin-bottom: 14px; }
.scroll.h { height: 14px; align-items: center; }
.track { display: flex; flex: 1 1 0; align-self: stretch; }
.v .track { flex-direction: column; }
.thumb { background: #cbcbcb; }
.h .thumb { margin: 1px 0; }
.t25 { height: 25%; } .t36 { height: 36%; } .t41 { height: 41%; } .t57 { width: 57%; } .t67 { width: 67%; }

.lower { display: flex; flex: 273 1 0; gap: 2px; min-height: 0; margin-top: 1px; }
.info { flex: 419 1 0; background: #f4f2ed; }
.info .view { padding: 5px 0 0 8px; }
.info h2 { color: #24408c; font: 16px/20px "Liberation Serif", "Times New Roman", serif; }
.info dl { display: grid; grid-template-columns: 134px 1fr; margin-top: 9px; font: 14px/18px "Liberation Serif", "Times New Roman", serif; }
dt { color: #1c7450; white-space: nowrap; }
dd { color: #c02028; white-space: pre; }
.spaced { margin-top: 9px; }
.bav { flex: 493 1 0; background: #f5f1e5; }
.bav .view { padding: 8px 0 0 7px; color: #84144c; font: 14px/18px "Liberation Serif", "Times New Roman", serif; }
.bav p { margin-top: 11px; font-size: 13px; white-space: nowrap; }
.minis { display: grid; grid-template-columns: 70px 70px 70px; gap: 8px 28px; margin: 6px 0 0 11px; }
figcaption { height: 20px; color: #c43c40; text-align: center; }
.minis svg { width: 70px; height: 70px; }
.minis text { font-size: 12px; fill: #20409c; text-anchor: middle; }
.minis .ref { fill: #4c9a50; }

.info-tabs { display: grid; grid-template-columns: 49px 46px 68px 22px; flex: none; height: 22px; border-top: 2px solid #5c5c5c; border-bottom: 2px solid #fff; box-sizing: border-box; }
.info-tabs button { height: 15px; border: solid #aaa; border-width: 0 1px 1px 0; line-height: 15px; }
.info-tabs button.active { border: solid #333; border-width: 0 2px 2px 1px; height: 16px; color: #d82830; background: #f6f6f6; }

.status { display: flex; align-items: stretch; flex: none; height: 16px; }
.hint { flex: 1; padding-left: 2px; line-height: 18px; }
.cell { box-sizing: border-box; width: 23px; margin: 2px 0 0 1px; border: solid #aaa; border-width: 1px 0 0 1px; line-height: 13px; }
.cell:nth-of-type(3) { width: 27px; text-align: center; font-size: 10px; }
.cell.grip { display: flex; align-items: end; justify-content: end; width: 25px; }
.grip svg { width: 9px; height: 9px; }

.taskbar { display: flex; flex: none; height: 31px; background: linear-gradient(90deg, #1c3028 0%, #1c3028 52%, #41322b 60%); color: #eee; }
.start { display: flex; align-items: center; justify-content: center; width: 38px; background: #41322b; }
.start svg { width: 14px; height: 14px; }
.search { display: flex; align-items: center; flex: none; width: 268px; box-sizing: border-box; padding-left: 8px; background: #f0f0f0; }
.search svg { width: 14px; height: 14px; }
.search input { flex: 1; min-width: 0; margin-left: 8px; padding: 0; border: 0; outline: 0; background: none; font: 11px/16px "Open Sans", "Noto Sans", sans-serif; color: #333; }
.search input::placeholder { color: #444; opacity: 1; }
.app { display: flex; align-items: center; justify-content: center; width: 39px; box-sizing: border-box; border-bottom: 2px solid transparent; }
.app svg { width: 19px; height: 19px; }
.open { background: linear-gradient(#7ab4e0, #7ab4e0) center bottom / 32px 2px no-repeat border-box; }
.flash { background: linear-gradient(#f4ec20, #f4ec20) center bottom / 32px 2px no-repeat border-box, linear-gradient(90deg, transparent 3px, #7c8424 3px, #7c8424 26px, #34483c 26px, #34483c 35px, transparent 35px) border-box; }
.current { background: linear-gradient(#7ab4e0, #7ab4e0) bottom / 100% 2px no-repeat border-box, #4a5c58 border-box; }
.tray { display: flex; align-items: center; margin-left: auto; padding-right: 14px; }
.tray svg { width: 18px; height: 18px; }
.tray button { width: 19px; }
.lang { margin-left: 6px; width: 27px; }
time { width: 44px; text-align: center; line-height: 14px; margin-right: 12px; }
.tray .notice { width: 20px; }
.tray .notice svg { width: 20px; height: 20px; overflow: visible; }
</style>
